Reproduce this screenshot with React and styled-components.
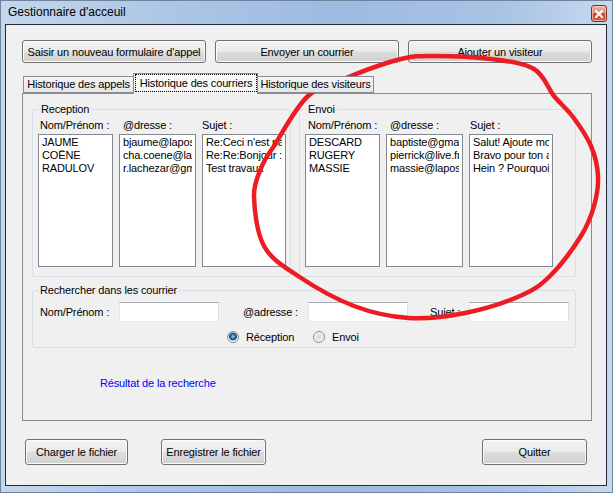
import React from "react";
import styled, { createGlobalStyle } from "styled-components";

const FONT = `"Liberation Sans", Arial, sans-serif`;

const GlobalStyle = createGlobalStyle`
  html, body { margin: 0; padding: 0; background: #ffffff; }
  body { font-family: ${FONT}; font-size: 11px; letter-spacing: -0.15px; color: #000; overflow: hidden; }
  #root { width: 613px; height: 493px; }
  * { box-sizing: border-box; }
`;

const Window = styled.div`
  position: relative;
  width: 613px;
  height: 493px;
  border: 1px solid #6f839c;
  padding: 0 5px 6px 4px;
  display: flex;
  flex-direction: column;
  background: linear-gradient(90deg, #c3d6ed 0%, #aec7e6 25%, #9dbae0 55%, #a9c3e4 82%, #c6d9ef 100%);
`;

const TitleBar = styled.div`
  height: 23px;
  display: flex;
  justify-content: space-between;
  align-items: flex-start;
`;

const Title = styled.div`
  font-family: "Liberation Sans", Arial, sans-serif;
  font-size: 12px;
  letter-spacing: 0;
  line-height: 23px;
  padding-left: 3px;
  color: #000;
`;

const CloseButton = styled.div`
  width: 16px;
  height: 17px;
  margin-top: 4px;
  border: 1px solid #7a3226;
  border-radius: 3px;
  background: linear-gradient(to bottom, #eeb2a4 0%, #de8a74 45%, #c8462c 55%, #d8684c 100%);
  box-shadow: inset 0 0 0 1px rgba(255, 220, 210, 0.6);
  display: flex;
  align-items: center;
  justify-content: center;
`;

const Client = styled.div`
  flex: 1;
  border: 1px solid #1f2b3a;
  background: #f0f0f0;
  display: flex;
  flex-direction: column;
`;

const TopButtons = styled.div`
  display: flex;
  gap: 9px;
  margin: 15px 14px 0 16px;
`;

const PushButton = styled.button`
  height: ${(p) => p.$h}px;
  ${(p) => (p.$w ? `width: ${p.$w}px; flex: none;` : "flex: 1;")}
  margin-left: ${(p) => p.$ml || 0};
  border: 1px solid #707070;
  border-radius: 3px;
  background: linear-gradient(to bottom, #f2f2f2 0%, #ebebeb 48%, #dddddd 52%, #cfcfcf 100%);
  box-shadow: inset 0 0 0 1px #fbfbfb;
  font-family: ${FONT};
  font-size: 11px;
  letter-spacing: -0.15px;
  color: #000;
  padding: 0;
  white-space: nowrap;
`;

const TabControl = styled.div`
  margin: 10px 14px 0 16px;
  display: flex;
  flex-direction: column;
`;

const TabStrip = styled.div`
  height: 20px;
  display: flex;
  align-items: flex-end;
  padding-left: 1px;
  position: relative;
  z-index: 1;
`;

const Tab = styled.div`
  width: ${(p) => p.$w}px;
  height: ${(p) => (p.$active ? 21 : 17)}px;
  margin-bottom: ${(p) => (p.$active ? -1 : 0)}px;
  border: 1px solid #898c95;
  border-bottom: ${(p) => (p.$active ? "none" : "1px solid #898c95")};
  border-left-width: ${(p) => (p.$noLeft ? 0 : 1)}px;
  border-right-width: ${(p) => (p.$noRight ? 0 : 1)}px;
  background: ${(p) =>
    p.$active ? "linear-gradient(to bottom, #fdfdfd, #f3f3f3)" : "linear-gradient(to bottom, #f4f4f4, #e6e6e6)"};
  text-align: center;
  line-height: 15px;
  white-space: nowrap;
`;

const FocusBox = styled.div`
  height: 18px;
  margin: 0 0 0 1px;
  border: 1px dotted #000;
  line-height: 16px;
`;

const TabPage = styled.div`
  height: 328px;
  border: 1px solid #898c95;
  background: #f0f0f0;
  padding: 9px 15px 0 9px;
  display: flex;
  flex-direction: column;
`;

const GroupsRow = styled.div`
  display: flex;
  gap: 8px;
`;

const GroupBox = styled.fieldset`
  margin: 0;
  min-width: 0;
  border: 1px solid #d5dfe5;
  border-radius: 3px;
  padding: ${(p) => p.$pad};
  flex: ${(p) => (p.$grow ? "1 1 0" : "none")};
  ${(p) => (p.$w ? `width: ${p.$w}px;` : "")}
  margin-top: ${(p) => p.$mt || 0}px;
`;

const Legend = styled.legend`
  padding: 0 2px;
  margin-left: ${(p) => p.$ml}px;
  line-height: 13px;
  font-size: 11px;
`;

const Columns = styled.div`
  display: flex;
  gap: 6px;
`;

const Column = styled.div`
  width: ${(p) => p.$w}px;
  display: flex;
  flex-direction: column;
`;

const ColumnHeader = styled.div`
  line-height: 13px;
  padding-left: ${(p) => p.$indent}px;
  margin-bottom: 2px;
  white-space: nowrap;
`;

const ListBox = styled.div`
  height: 133px;
  border: 1px solid #828790;
  background: #fff;
  padding: 1px 3px;
  overflow: hidden;
`;

const ListItem = styled.div`
  line-height: 13px;
  white-space: nowrap;
  overflow: hidden;
`;

const SearchGrid = styled.div`
  display: grid;
  grid-template-columns: 79px 100px 89px 100px 61px 100px;
  align-items: center;
`;

const FieldLabel = styled.div`
  padding-left: ${(p) => p.$indent}px;
  white-space: nowrap;
  line-height: 13px;
`;

const TextBox = styled.div`
  height: 20px;
  background: #fff;
  border: 1px solid;
  border-color: #abadb3 #dbdfe6 #e3e9ef #e2e3ea;
`;

const RadioRow = styled.div`
  margin-top: 8px;
  height: 14px;
  padding-left: 187px;
  display: grid;
  grid-template-columns: 86px auto;
  align-items: center;
`;

const RadioOption = styled.div`
  display: flex;
  align-items: center;
  gap: 7px;
  line-height: 13px;
`;

const RadioCircle = styled.span`
  width: 12px;
  height: 12px;
  border-radius: 50%;
  border: 1px solid #8e8f8f;
  flex: none;
  background: ${(p) =>
    p.$checked
      ? "radial-gradient(circle at 50% 45%, #9fdcf8 0px, #3b94cd 1.6px, #1b5389 3px, #12406e 3.6px, #e4e4e4 4.2px, #f3f3f3 5px, #fdfdfd 100%)"
      : "radial-gradient(circle at 50% 50%, #d6d6d6 0px, #e4e4e4 2.5px, #f1f1f1 4.5px, #fbfbfb 100%)"};
`;

const ResultLabel = styled.div`
  margin-top: 29px;
  padding-left: 68px;
  line-height: 13px;
  color: #0000ff;
`;

const BottomButtons = styled.div`
  display: flex;
  margin: 18px 19px 0 19px;
`;

const Annotation = styled.svg`
  position: absolute;
  left: 0;
  top: 0;
  pointer-events: none;
`;

const reception = {
  legend: "Reception",
  columns: [
    { label: "Nom/Prénom :", indent: 2, width: 75, items: ["JAUME", "COËNE", "RADULOV"] },
    { label: "@dresse :", indent: 4, width: 77, items: ["bjaume@laposte.net", "cha.coene@laposte.net", "r.lachezar@gmail.com"] },
    { label: "Sujet :", indent: 0, width: 84, items: ["Re:Ceci n'est pas un test", "Re:Re:Bonjour :)", "Test travaux"] },
  ],
};

const envoi = {
  legend: "Envoi",
  columns: [
    { label: "Nom/Prénom :", indent: 3, width: 75, items: ["DESCARD", "RUGERY", "MASSIE"] },
    { label: "@dresse :", indent: 4, width: 77, items: ["baptiste@gmail.com", "pierrick@live.fr", "massie@laposte.net"] },
    { label: "Sujet :", indent: 1, width: 84, items: ["Salut! Ajoute moi sur msn", "Bravo pour ton anniversaire", "Hein ? Pourquoi pas"] },
  ],
};

const tabs = [
  { label: "Historique des appels", w: 110 },
  { label: "Historique des courriers", w: 125 },
  { label: "Historique des visiteurs", w: 116 },
];
const activeTab = 1;

function MailGroup({ data, width, grow }) {
  return (
    <GroupBox $w={width} $grow={grow} $pad="3px 4px 9px 5px">
      <Legend $ml={1}>{data.legend}</Legend>
      <Columns>
        {data.columns.map((c) => (
          <Column key={c.label} $w={c.width}>
            <ColumnHeader $indent={c.indent}>{c.label}</ColumnHeader>
            <ListBox>
              {c.items.map((it) => (
                <ListItem key={it}>{it}</ListItem>
              ))}
            </ListBox>
          </Column>
        ))}
      </Columns>
    </GroupBox>
  );
}

const loop = [
  [433, 55], [490, 58], [533, 68], [553, 95], [572, 116], [590, 145], [597, 175], [593, 205],
  [580, 235], [549, 275], [519, 295], [464, 312], [408, 317], [353, 305], [297, 275],
  [263, 245], [253, 195], [261, 165], [273, 145], [307, 95], [350, 75], [400, 58],
];

function loopPath(pts) {
  const n = pts.length;
  let d = `M${pts[0][0]},${pts[0][1]}`;
  for (let i = 0; i < n; i++) {
    const p0 = pts[(i - 1 + n) % n];
    const p1 = pts[i];
    const p2 = pts[(i + 1) % n];
    const p3 = pts[(i + 2) % n];
    const c1 = [p1[0] + (p2[0] - p0[0]) / 6, p1[1] + (p2[1] - p0[1]) / 6];
    const c2 = [p2[0] - (p3[0] - p1[0]) / 6, p2[1] - (p3[1] - p1[1]) / 6];
    d += ` C${c1[0].toFixed(1)},${c1[1].toFixed(1)} ${c2[0].toFixed(1)},${c2[1].toFixed(1)} ${p2[0]},${p2[1]}`;
  }
  return d + " Z";
}

export default function App() {
  return (
    <>
      <GlobalStyle />
      <Window>
        <TitleBar>
          <Title>Gestionnaire d'acceuil</Title>
          <CloseButton>
            <svg width="8" height="8" viewBox="0 0 8 8">
              <path d="M1 1 L7 7 M7 1 L1 7" stroke="#ffffff" strokeWidth="2" strokeLinecap="square" />
            </svg>
          </CloseButton>
        </TitleBar>
        <Client>
          <TopButtons>
            <PushButton $h={23}>Saisir un nouveau formulaire d'appel</PushButton>
            <PushButton $h={23}>Envoyer un courrier</PushButton>
            <PushButton $h={23}>Ajouter un visiteur</PushButton>
          </TopButtons>
          <TabControl>
            <TabStrip>
              {tabs.map((t, i) => (
                <Tab
                  key={t.label}
                  $w={t.w}
                  $active={i === activeTab}
                  $noRight={i === activeTab - 1}
                  $noLeft={i === activeTab + 1}
                >
                  {i === activeTab ? <FocusBox>{t.label}</FocusBox> : t.label}
                </Tab>
              ))}
            </TabStrip>
            <TabPage>
              <GroupsRow>
                <MailGroup data={reception} width={259} />
                <MailGroup data={envoi} grow />
              </GroupsRow>
              <GroupBox $mt={7} $pad="5px 7px 3px 7px">
                <Legend $ml={-2}>Rechercher dans les courrier</Legend>
                <SearchGrid>
                  <FieldLabel $indent={0}>Nom/Prénom :</FieldLabel>
                  <TextBox />
                  <FieldLabel $indent={24}>@adresse :</FieldLabel>
                  <TextBox />
                  <FieldLabel $indent={22}>Sujet :</FieldLabel>
                  <TextBox />
                </SearchGrid>
                <RadioRow>
                  <RadioOption>
                    <RadioCircle $checked />
                    Réception
                  </RadioOption>
                  <RadioOption>
                    <RadioCircle />
                    Envoi
                  </RadioOption>
                </RadioRow>
              </GroupBox>
              <ResultLabel>Résultat de la recherche</ResultLabel>
            </TabPage>
          </TabControl>
          <BottomButtons>
            <PushButton $h={26} $w={103}>Charger le fichier</PushButton>
            <PushButton $h={26} $w={105} $ml="33px">Enregistrer le fichier</PushButton>
            <PushButton $h={26} $w={105} $ml="auto">Quitter</PushButton>
          </BottomButtons>
        </Client>
        <Annotation width="613" height="493" viewBox="0 0 613 493">
          <path d={loopPath(loop)} fill="none" stroke="#ec1c24" strokeWidth="4.5" strokeLinejoin="round" />
        </Annotation>
      </Window>
    </>
  );
}
